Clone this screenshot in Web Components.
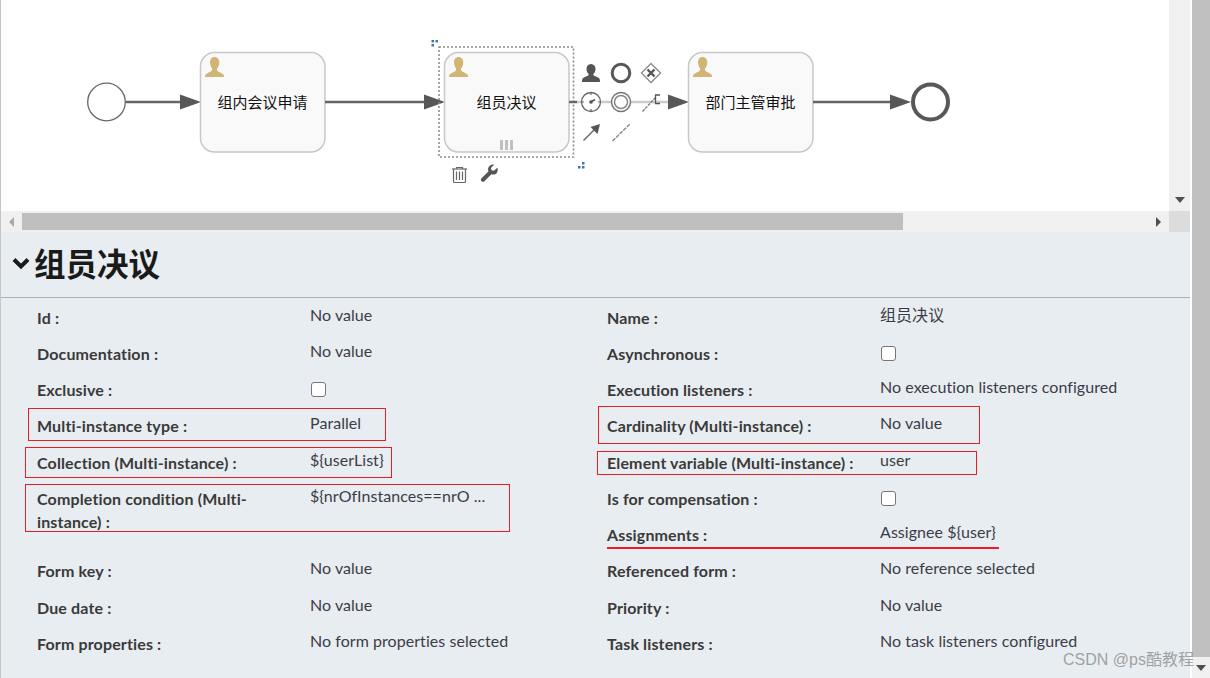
<!DOCTYPE html>
<html lang="zh">
<head>
<meta charset="utf-8">
<title>Process editor</title>
<style>
    html, body { margin: 0; height: 100%; background: #fff; overflow: hidden; }
    body { font-family: Lato, "Noto Sans CJK SC", sans-serif; color: #333; }
</style>
</head>
<body>
<editor-shell>
    <bpmn-canvas slot="canvas"></bpmn-canvas>
    <prop-panel slot="panel" heading="组员决议">
        <prop-row slot="left" label="Id :" value="No value"></prop-row>
        <prop-row slot="left" label="Documentation :" value="No value"></prop-row>
        <prop-row slot="left" label="Exclusive :" check></prop-row>
        <prop-row slot="left" label="Multi-instance type :" value="Parallel"></prop-row>
        <prop-row slot="left" label="Collection (Multi-instance) :" value="${userList}"></prop-row>
        <prop-row slot="left" label="Completion condition (Multi-instance) :" value="${nrOfInstances==nrO ..." tall></prop-row>
        <prop-row slot="left" label="Form key :" value="No value"></prop-row>
        <prop-row slot="left" label="Due date :" value="No value"></prop-row>
        <prop-row slot="left" label="Form properties :" value="No form properties selected"></prop-row>

        <prop-row slot="right" label="Name :" value="组员决议"></prop-row>
        <prop-row slot="right" label="Asynchronous :" check></prop-row>
        <prop-row slot="right" label="Execution listeners :" value="No execution listeners configured"></prop-row>
        <prop-row slot="right" label="Cardinality (Multi-instance) :" value="No value"></prop-row>
        <prop-row slot="right" label="Element variable (Multi-instance) :" value="user"></prop-row>
        <prop-row slot="right" label="Is for compensation :" check></prop-row>
        <prop-row slot="right" label="Assignments :" value="Assignee ${user}"></prop-row>
        <prop-row slot="right" label="Referenced form :" value="No reference selected"></prop-row>
        <prop-row slot="right" label="Priority :" value="No value"></prop-row>
        <prop-row slot="right" label="Task listeners :" value="No task listeners configured"></prop-row>
    </prop-panel>
    <red-mark slot="marks" style="left:28px;top:408px;width:358px;height:33px"></red-mark>
    <red-mark slot="marks" style="left:25px;top:447px;width:367px;height:31px"></red-mark>
    <red-mark slot="marks" style="left:25px;top:484px;width:485px;height:48px"></red-mark>
    <red-mark slot="marks" style="left:598px;top:406px;width:382px;height:38px"></red-mark>
    <red-mark slot="marks" style="left:597px;top:451px;width:380px;height:24px"></red-mark>
    <red-mark slot="marks" underline style="left:607px;top:547px;width:392px;height:0"></red-mark>
</editor-shell>

<script>
class EditorShell extends HTMLElement {
    constructor() {
        super();
        this.attachShadow({ mode: 'open' });
        this.shadowRoot.innerHTML = `
            <style>
                :host {
                    display: grid;
                    grid-template-columns: 1190px 2px 18px;
                    width: 1210px;
                    height: 678px;
                    position: relative;
                    overflow: hidden;
                }
                .main { display: flex; flex-direction: column; min-width: 0; border-left: 1px solid #c4c4c4; }
                .pane {
                    display: grid;
                    grid-template-columns: 1fr 21px;
                    grid-template-rows: 211px 21px;
                    background: #fff;
                }
                .v-bar { background: #f0f0f0; display: flex; align-items: flex-end; justify-content: center; padding-bottom: 8px; }
                .h-bar { background: #f0f0f0; display: flex; align-items: center; }
                .h-bar .arrow-l { width: 21px; display: flex; justify-content: center; }
                .h-bar .thumb { width: 881px; height: 17px; background: #bfbfbf; }
                .h-bar .arrow-r { margin-left: auto; margin-right: 8px; }
                .corner { background: #dcdcdc; }
                .outer { display: flex; flex-direction: column; }
                .outer .thumb { flex: 1; background: #c0c0c0; }
                .outer .foot { height: 21px; background: #f0f0f0; display: flex; justify-content: center; align-items: center; }
                .up { border-left: 5px solid transparent; border-right: 5px solid transparent; border-top: 6px solid #505050; }
                .left { border-top: 5px solid transparent; border-bottom: 5px solid transparent; border-right: 5px solid #a8a8a8; }
                .right { border-top: 5px solid transparent; border-bottom: 5px solid transparent; border-left: 5px solid #505050; }
                .credit {
                    position: absolute;
                    left: 1063px;
                    top: 650px;
                    font: 16px/20px "Liberation Sans", "Noto Sans CJK SC", sans-serif;
                    color: rgba(125, 125, 125, 0.7);
                    white-space: nowrap;
                }
            </style>
            <div class="main">
                <div class="pane">
                    <slot name="canvas"></slot>
                    <div class="v-bar"><span class="up"></span></div>
                    <div class="h-bar">
                        <span class="arrow-l"><span class="left" style="display:block"></span></span>
                        <span class="thumb"></span>
                        <span class="arrow-r right"></span>
                    </div>
                    <div class="corner"></div>
                </div>
                <slot name="panel"></slot>
            </div>
            <div></div>
            <div class="outer">
                <div class="thumb"></div>
                <div class="foot"><span class="up"></span></div>
            </div>
            <slot name="marks"></slot>
            <div class="credit">CSDN @ps酷教程</div>
        `;
    }
}

class BpmnCanvas extends HTMLElement {
    constructor() {
        super();
        this.attachShadow({ mode: 'open' });
        const person = (x, y, color) => `
            <path fill="${color}" transform="translate(${x} ${y}) scale(.95 1)" d="M10 0c3.200 0 5 2.400 5 5.600 0 2.600-1 4.700-2.400 6.100v1.700c1.500 1.300 5.200 2.400 7 4.300.4.700.4 1.300.4 2.300H0c0-1 0-1.600.4-2.300 1.800-1.900 5.500-3 7-4.300v-1.700C6.500 10.300 5.300 8.200 5.300 5.600 5.300 2.400 6.800 0 10 0z"/>`;
        const task = (x, label) => `
            <rect x="${x + .5}" y="52.500" width="124.500" height="99.500" rx="14" fill="#f9f9f9" stroke="#c8c8c8" stroke-width="1.500"/>
            ${person(x + 5, 57, '#d1b574')}
            <text x="${x + 62.500}" y="107.500" text-anchor="middle" class="label">${label}</text>`;
        const flow = (x1, x2, y = 102) => `
            <line x1="${x1}" y1="${y}" x2="${x2 - 18}" y2="${y}" stroke="#666" stroke-width="2.500"/>
            <path d="M${x2 - 21} ${y - 7.500}L${x2} ${y}L${x2 - 21} ${y + 7.500}z" fill="#585858"/>`;
        this.shadowRoot.innerHTML = `
            <style>
                :host { display: block; width: 100%; height: 211px; overflow: hidden; background: #fff; }
                svg { display: block; }
                .label { font: 15px "Noto Sans CJK SC", sans-serif; fill: #111; }
            </style>
            <svg width="1168" height="211" viewBox="1 0 1168 211">
                <circle cx="106.500" cy="102" r="18.800" fill="#fff" stroke="#666" stroke-width="1.300"/>
                ${flow(126, 201)}
                ${task(200, '组内会议申请')}
                ${flow(325, 445)}
                ${task(444, '组员决议')}
                <rect x="439" y="47" width="134.500" height="110" fill="none" stroke="#8c8c8c" stroke-width="1.600" stroke-dasharray="2 2"/>
                <g fill="#3f74b5">
                    <rect x="431.500" y="40" width="2.500" height="2.500"/><rect x="435.500" y="40" width="2.500" height="2.500"/><rect x="431.500" y="44" width="2.500" height="2.500"/>
                    <rect x="582" y="162" width="2.500" height="2.500"/><rect x="578" y="166" width="2.500" height="2.500"/><rect x="582" y="166" width="2.500" height="2.500"/>
                </g>
                <g fill="#c0c0c0">
                    <rect x="500" y="140" width="3" height="10"/><rect x="505" y="140" width="3" height="10"/><rect x="510" y="140" width="3" height="10"/>
                </g>
                <line x1="569" y1="102" x2="577" y2="102" stroke="#666" stroke-width="2.500"/>
                <line x1="577" y1="102" x2="668" y2="102" stroke="#ccc" stroke-width="2.500"/>
                <path d="M668 94.500L689 102L668 109.500z" fill="#585858"/>

                <!-- context pad -->
                <path fill="#555" d="M591 64c3 0 4.500 2.200 4.500 5 0 2.200-.9 4-2.100 5v1.300c1.500 1 4.700 1.700 6 3.200.5.700.6 2 .6 3.500h-18c0-1.500.1-2.800.6-3.500 1.300-1.500 4.500-2.200 6-3.200V74c-1.200-1-2.100-2.800-2.100-5 0-2.800 1.500-5 4.500-5z"/>
                <circle cx="621" cy="73" r="8.800" fill="#fff" stroke="#585858" stroke-width="3"/>
                <path d="M651 63.500L660.500 73L651 82.500L641.500 73z" fill="#fff" stroke="#8a8a8a" stroke-width="1.300"/>
                <path d="M647.500 69.500L654.500 76.500M654.500 69.500L647.500 76.500" stroke="#555" stroke-width="2.400"/>

                <circle cx="591" cy="102" r="9.500" fill="#fff" stroke="#666" stroke-width="1.300"/>
                <path d="M591 92.500v2.500M591 109v2.500M581.500 102h2.500M598 102h2.500" stroke="#666" stroke-width="1.200"/>
                <path d="M590 102.500L595 99.500" stroke="#555" stroke-width="1.500"/>
                <circle cx="591" cy="102" r="1.800" fill="#555"/>
                <circle cx="621" cy="102" r="9.500" fill="#fff" stroke="#777" stroke-width="1.500"/>
                <circle cx="621" cy="102" r="6.500" fill="#fff" stroke="#888" stroke-width="1.500"/>
                <path d="M642.500 111.500L656 97" stroke="#777" stroke-width="1.300" stroke-dasharray="3 1"/>
                <path d="M660 95h-4.500v8.500h4.500" fill="none" stroke="#555" stroke-width="1.300"/>

                <path d="M583.500 140.500L596 128" stroke="#666" stroke-width="1.500"/>
                <path d="M600 124L597.500 134L590.500 127z" fill="#555"/>
                <path d="M612.500 141L630 124" stroke="#888" stroke-width="1.400" stroke-dasharray="4 1"/>

                <g fill="none" stroke="#666" stroke-width="1.200">
                    <path d="M452 169h15"/>
                    <path d="M456.500 169v-1.500h6v1.500"/>
                    <path d="M453.500 169v12.500a1 1 0 0 0 1 1h10a1 1 0 0 0 1-1V169"/>
                    <path d="M456.500 171.500v8.500M459.500 171.500v8.500M462.500 171.500v8.500"/>
                </g>
                <path fill="#555" d="M497.500 167.500l-3.500 3.300-2.500-.5-.6-2.400 3.400-3.400c-3-.6-5.700 1.200-6.200 3.900-.2 1.100 0 2.100.3 3l-6.900 6.800c-.9.900-.9 2.200 0 3 .8.800 2.100.8 2.900 0l7-6.900c1 .3 2 .4 3 .2 2.600-.6 4-3.600 3.100-6.500z"/>

                ${task(688, '部门主管审批')}
                ${flow(813, 911)}
                <circle cx="930.500" cy="102" r="17.500" fill="#fff" stroke="#585858" stroke-width="4"/>
            </svg>
        `;
    }
}

class PropPanel extends HTMLElement {
    constructor() {
        super();
        this.attachShadow({ mode: 'open' });
        this.shadowRoot.innerHTML = `
            <style>
                :host { display: block; flex: 1; background: #e8edf1; }
                header {
                    display: flex;
                    align-items: center;
                    gap: 3px;
                    height: 66px;
                    padding: 0 0 3px 10px;
                    border-bottom: 1px solid #aab0b6;
                    box-sizing: border-box;
                }
                h2 {
                    margin: 0;
                    font: 700 31.500px/1 "Noto Sans CJK SC", sans-serif;
                    color: #1a1a1a;
                }
                svg { display: block; }
                .cols { display: grid; grid-template-columns: 570px 1fr; padding: 4.800px 0 0 36px; }
                .col { display: flex; flex-direction: column; }
            </style>
            <header>
                <svg width="20" height="14" viewBox="0 0 20 14"><path d="M3 3.500L10 10.500L17 3.500" fill="none" stroke="#1a1a1a" stroke-width="4"/></svg>
                <h2>${this.getAttribute('heading')}</h2>
            </header>
            <div class="cols">
                <div class="col"><slot name="left"></slot></div>
                <div class="col"><slot name="right"></slot></div>
            </div>
        `;
    }
}

class PropRow extends HTMLElement {
    constructor() {
        super();
        this.attachShadow({ mode: 'open' });
    }

    connectedCallback() {
        const value = this.hasAttribute('check')
            ? '<input type="checkbox" tabindex="-1">'
            : `<span>${this.getAttribute('value')}</span>`;
        this.shadowRoot.innerHTML = `
            <style>
                :host {
                    display: grid;
                    grid-template-columns: 255px 1fr;
                    column-gap: 18px;
                    height: 36.220px;
                    font-size: 16px;
                    line-height: 23px;
                }
                :host([tall]) { height: 72.600px; }
                .label { padding-top: 3px; font-weight: 700; letter-spacing: .14px; color: #3a3a3a; }
                .value { color: #3c3c48; letter-spacing: .05px; }
                input {
                    appearance: none;
                    display: block;
                    width: 15px;
                    height: 15px;
                    margin: 7px 0 0 1px;
                    background: #fff;
                    border: 1px solid #767676;
                    border-radius: 3px;
                    box-sizing: border-box;
                }
            </style>
            <div class="label">${this.getAttribute('label')}</div>
            <div class="value">${value}</div>
        `;
    }
}

class RedMark extends HTMLElement {
    constructor() {
        super();
        this.attachShadow({ mode: 'open' });
        this.shadowRoot.innerHTML = `
            <style>
                :host { position: absolute; box-sizing: border-box; border: 1px solid #ec1c24; pointer-events: none; }
                :host([underline]) { border-width: 2px 0 0; }
            </style>
        `;
    }
}

customElements.define('editor-shell', EditorShell);
customElements.define('bpmn-canvas', BpmnCanvas);
customElements.define('prop-panel', PropPanel);
customElements.define('prop-row', PropRow);
customElements.define('red-mark', RedMark);
</script>
</body>
</html>
